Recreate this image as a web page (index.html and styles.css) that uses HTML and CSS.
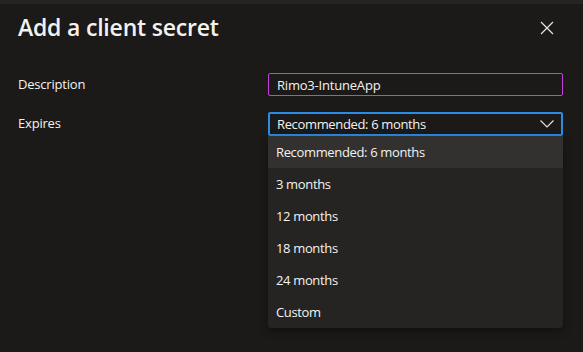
FILE: index.html
```html
<!DOCTYPE html>
<html lang="en">
<head>
    <meta charset="UTF-8">
    <meta name="viewport" content="width=device-width, initial-scale=1.0">
    <title>Add a client secret</title>
    <link rel="stylesheet" href="styles.css">
</head>
<body>
    <div class="top-strip"></div>
    <div class="panel">
        <div class="panel-header">
            <h1>Add a client secret</h1>
            <button class="close-btn" aria-label="Close">
                <svg width="14" height="14" viewBox="0 0 14 14">
                    <path d="M1 1 L13 13 M13 1 L1 13" stroke="#e8e6e3" stroke-width="1.2" fill="none"/>
                </svg>
            </button>
        </div>

        <div class="form-row">
            <label class="form-label">Description</label>
            <div class="field">
                <input class="text-input" type="text" value="Rimo3-IntuneApp">
            </div>
        </div>

        <div class="form-row">
            <label class="form-label">Expires</label>
            <div class="field">
                <div class="select">
                    <span>Recommended: 6 months</span>
                    <svg width="14" height="8" viewBox="0 0 14 8">
                        <path d="M0.5 0.5 L7 7 L13.5 0.5" stroke="#e8e6e3" stroke-width="1.1" fill="none"/>
                    </svg>
                </div>
                <ul class="dropdown">
                    <li class="selected">Recommended: 6 months</li>
                    <li>3 months</li>
                    <li>12 months</li>
                    <li>18 months</li>
                    <li>24 months</li>
                    <li>Custom</li>
                </ul>
            </div>
        </div>
    </div>
</body>
</html>
```

FILE: styles.css
```css
:root {
    --bg-color: #1b1a19;
    --strip-color: #252423;
    --text-color: #f3f2f1;
    --menu-color: #252423;
    --menu-hover: #323130;
    --accent-blue: #2b8ce8;
    --accent-pink: #c43fdc;
}

* {
    box-sizing: border-box;
    margin: 0;
    padding: 0;
}

body {
    font-family: 'Open Sans', 'Noto Sans', sans-serif;
    background-color: var(--bg-color);
    color: var(--text-color);
    width: 583px;
    height: 352px;
    overflow: hidden;
}

.top-strip {
    height: 4px;
    background: var(--strip-color);
}

.panel {
    padding: 0 20px 0 18px;
}

.panel-header {
    display: flex;
    justify-content: space-between;
    align-items: center;
    height: 48px;
    margin-bottom: 21px;
}

h1 {
    font-size: 23px;
    font-weight: 600;
    letter-spacing: -0.2px;
    color: #f3f2f1;
    margin-top: -3px;
}

.close-btn {
    background: none;
    border: none;
    width: 14px;
    height: 14px;
    margin-right: 9px;
    display: flex;
    cursor: pointer;
}

.form-row {
    display: flex;
    align-items: flex-start;
    margin-bottom: 16px;
    font-size: 13px;
}

.form-label {
    width: 250px;
    line-height: 23px;
    letter-spacing: -0.2px;
}

.field {
    width: 295px;
}

.text-input {
    width: 100%;
    height: 23px;
    background: var(--bg-color);
    border: 1px solid var(--accent-pink);
    border-radius: 2px;
    color: var(--text-color);
    font-family: inherit;
    font-size: 13px;
    letter-spacing: -0.2px;
    padding: 0 8px;
    outline: none;
}

.select {
    height: 24px;
    border: 2px solid var(--accent-blue);
    border-radius: 2px;
    display: flex;
    align-items: center;
    justify-content: space-between;
    padding: 0 7px 0 7px;
    letter-spacing: -0.35px;
}

.dropdown {
    list-style: none;
    background: var(--menu-color);
    border-radius: 0 0 3px 3px;
    box-shadow: 0 3px 8px rgba(0, 0, 0, 0.4);
}

.dropdown li {
    height: 32px;
    line-height: 33px;
    padding: 0 8px;
    letter-spacing: -0.35px;
}

.dropdown li.selected {
    background: var(--menu-hover);
}
```
